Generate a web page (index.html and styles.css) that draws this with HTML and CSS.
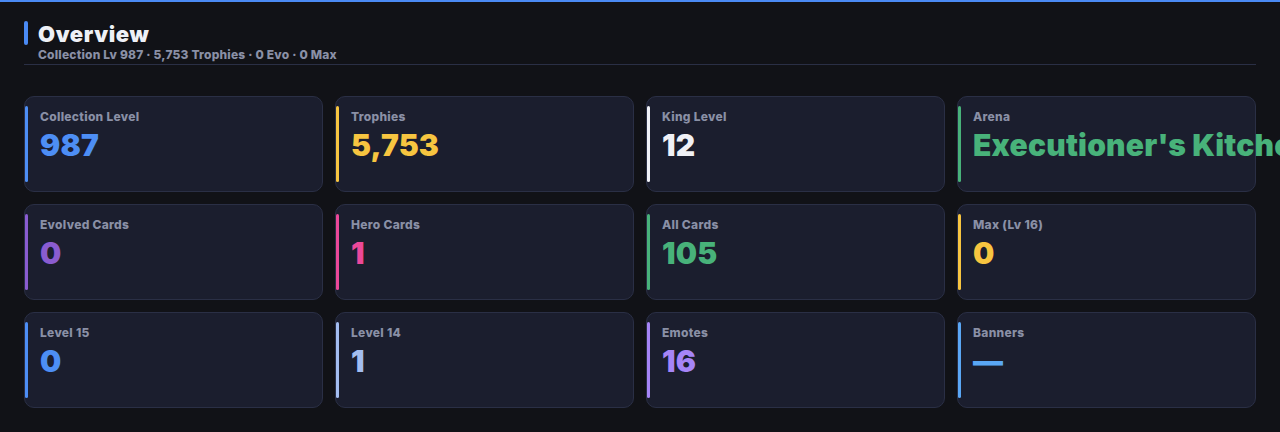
FILE: index.html
```html
<!DOCTYPE html>
<html lang="en">
  <head>
    <meta charset="UTF-8" />
    <meta name="viewport" content="width=device-width, initial-scale=1.0" />
    <title>Overview</title>
    <link rel="stylesheet" href="styles.css">
  </head>
  <body>
    <main class="page">
      <header class="section-head">
        <h1 class="section-title">Overview</h1>
        <p class="section-sub">Collection Lv 987 · 5,753 Trophies · 0 Evo · 0 Max</p>
      </header>

      <section class="stats">
        <div class="stat stat-blue">
          <span class="stat-label">Collection Level</span>
          <span class="stat-value">987</span>
        </div>
        <div class="stat stat-yellow">
          <span class="stat-label">Trophies</span>
          <span class="stat-value">5,753</span>
        </div>
        <div class="stat stat-white">
          <span class="stat-label">King Level</span>
          <span class="stat-value">12</span>
        </div>
        <div class="stat stat-green">
          <span class="stat-label">Arena</span>
          <span class="stat-value">Executioner's Kitchen</span>
        </div>

        <div class="stat stat-purple">
          <span class="stat-label">Evolved Cards</span>
          <span class="stat-value">0</span>
        </div>
        <div class="stat stat-pink">
          <span class="stat-label">Hero Cards</span>
          <span class="stat-value">1</span>
        </div>
        <div class="stat stat-green">
          <span class="stat-label">All Cards</span>
          <span class="stat-value">105</span>
        </div>
        <div class="stat stat-yellow">
          <span class="stat-label">Max (Lv 16)</span>
          <span class="stat-value">0</span>
        </div>

        <div class="stat stat-blue">
          <span class="stat-label">Level 15</span>
          <span class="stat-value">0</span>
        </div>
        <div class="stat stat-sky">
          <span class="stat-label">Level 14</span>
          <span class="stat-value">1</span>
        </div>
        <div class="stat stat-lavender">
          <span class="stat-label">Emotes</span>
          <span class="stat-value">16</span>
        </div>
        <div class="stat stat-azure">
          <span class="stat-label">Banners</span>
          <span class="stat-value">—</span>
        </div>
      </section>
    </main>
  </body>
</html>
```

FILE: styles.css
```css
html,
body {
  margin: 0;
  background: #111217;
  font-family: "Inter", "Lato", sans-serif;
  color: #eef0f6;
}

body {
  border-top: 2px solid #4a8af4;
  height: 430px;
  overflow: hidden;
}

.page {
  padding: 18px 24px 0;
}

/* header */
.section-head {
  border-bottom: 1px solid #2a2f45;
  padding-bottom: 2px;
}

.section-title {
  position: relative;
  margin: 0;
  padding-left: 14px;
  font-size: 22px;
  font-weight: 900;
  line-height: 28px;
  letter-spacing: 0.6px;
}

.section-title::before {
  content: "";
  position: absolute;
  left: 0;
  top: 1px;
  width: 4px;
  height: 24px;
  border-radius: 2px;
  background: #4a8af4;
}

.section-sub {
  margin: 0;
  padding-left: 14px;
  font-size: 12px;
  font-weight: 800;
  line-height: 14px;
  letter-spacing: 0.2px;
  color: #8a90a6;
}

/* stat cards */
.stats {
  display: grid;
  grid-template-columns: repeat(4, minmax(0, 1fr));
  gap: 12px;
  margin-top: 31px;
}

.stat {
  position: relative;
  display: flex;
  flex-direction: column;
  min-width: 0;
  height: 96px;
  padding: 13px 0 0 15px;
  box-sizing: border-box;
  background: #1b1e2e;
  border: 1px solid #2a2f45;
  border-radius: 10px;
}

.stat::before {
  content: "";
  position: absolute;
  left: 0;
  top: 9px;
  bottom: 9px;
  width: 3px;
  border-radius: 2px;
  background: var(--accent);
}

.stat-label {
  font-size: 12px;
  font-weight: 800;
  line-height: 14px;
  letter-spacing: 0.3px;
  color: #8a90a6;
}

.stat-value {
  margin-top: 3px;
  font-size: 30px;
  font-weight: 900;
  line-height: 36px;
  white-space: nowrap;
  letter-spacing: 0.2px;
  color: var(--accent);
}

.stat-blue { --accent: #4d8ef5; }
.stat-yellow { --accent: #f7c540; }
.stat-white { --accent: #f0f1f6; }
.stat-green { --accent: #48b27a; }
.stat-purple { --accent: #8a5cd0; }
.stat-pink { --accent: #ec4899; }
.stat-sky { --accent: #a3bdf0; }
.stat-lavender { --accent: #a685f7; }
.stat-azure { --accent: #5aa7f5; }
```
